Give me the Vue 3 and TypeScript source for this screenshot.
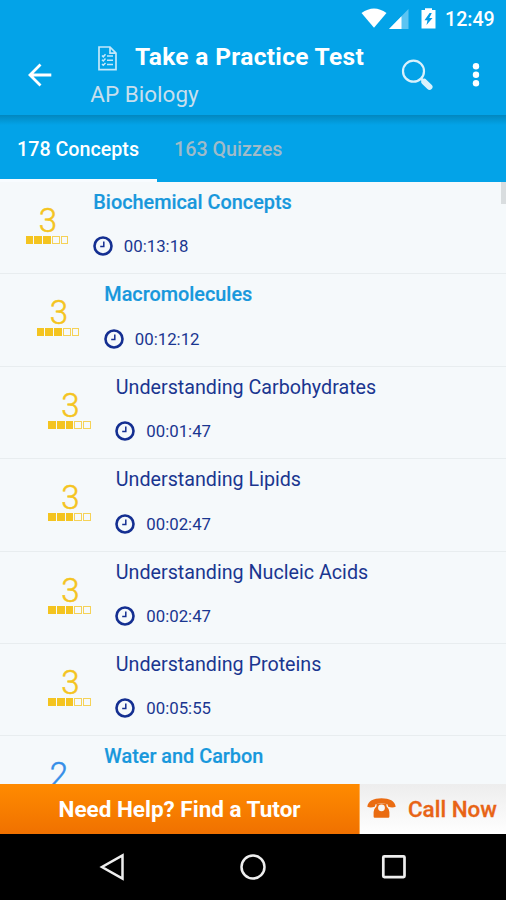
<script setup lang="ts">
interface Concept {
  title: string
  level: number
  rating: number
  time?: string
}

const concepts: Concept[] = [
  { title: 'Biochemical Concepts', level: 0, rating: 3, time: '00:13:18' },
  { title: 'Macromolecules', level: 1, rating: 3, time: '00:12:12' },
  { title: 'Understanding Carbohydrates', level: 2, rating: 3, time: '00:01:47' },
  { title: 'Understanding Lipids', level: 2, rating: 3, time: '00:02:47' },
  { title: 'Understanding Nucleic Acids', level: 2, rating: 3, time: '00:02:47' },
  { title: 'Understanding Proteins', level: 2, rating: 3, time: '00:05:55' },
  { title: 'Water and Carbon', level: 1, rating: 2 },
]
</script>

<template>
  <div class="screen">
    <header class="top">
      <div class="status">
        <svg class="wifi" width="26" height="20" viewBox="0 0 26 20"><path d="M0.5 5Q13-4 25.5 5L13 19.8Z" fill="#fff" /></svg>
        <svg class="signal" width="20" height="20" viewBox="0 0 20 20">
          <path d="M0 20L19.5 0V20Z" fill="#5cc4f2" /><path d="M0 20L12.5 7.2V20Z" fill="#fff" />
        </svg>
        <svg class="battery" width="15" height="22" viewBox="0 0 15 22">
          <path d="M4 2V0.3H11V2H14.5V20.5H.5V2Z" fill="#fff" />
          <path d="M8.6 5L3.5 12.2H6.5L5.5 17L11.5 10H8.3L10.8 5Z" fill="#039be5" />
        </svg>
        <span class="clock">12:49</span>
      </div>
      <div class="bar">
        <svg class="back" width="24" height="24" viewBox="0 0 24 24" fill="none" stroke="#fff" stroke-width="2.8">
          <path d="M23.3 12H2.5M12.5 1.5L2 12L12.5 22.5" />
        </svg>
        <div class="heading">
          <div class="title-line">
            <svg width="19" height="25" viewBox="0 0 19 25" fill="none" stroke="#c4e8fa" stroke-width="1.7">
              <path d="M1 1H12L18 7.2V23.7H1ZM12 1V7.2H18" />
              <path d="M9 10H15M9 14.2H15M9 18.5H15M4 9.5L5.3 10.8L7.5 8.2M4 13.7L5.3 15L7.5 12.5M4 18L5.3 19.3L7.5 17" stroke-width="1.5" />
            </svg>
            <h1>Take a Practice Test</h1>
          </div>
          <div class="subject">AP Biology</div>
        </div>
        <svg class="search" width="33" height="33" viewBox="0 0 33 33" fill="none" stroke="#d9f1fc">
          <circle cx="12.5" cy="12.2" r="10.5" stroke-width="2.2" />
          <path d="M20 19.5L23 22.5" stroke-width="2.5" />
          <path d="M23.3 22.8L28.5 27.8" stroke-width="6" stroke-linecap="round" />
        </svg>
        <svg class="more" width="8" height="26" viewBox="0 0 8 26" fill="#fff">
          <circle cx="4" cy="4.2" r="3.2" /><circle cx="4" cy="12.7" r="3.2" /><circle cx="4" cy="21.2" r="3.2" />
        </svg>
      </div>
    </header>

    <nav class="tabs">
      <div class="tab active"><span>178 Concepts</span></div>
      <div class="tab"><span>163 Quizzes</span></div>
    </nav>

    <main class="list">
      <div v-for="concept in concepts" :key="concept.title" class="row" :class="['level-' + concept.level, 'rating-' + concept.rating]">
        <div class="score">
          <span class="digit">{{ concept.rating }}</span>
          <div class="boxes">
            <i v-for="n in 5" :key="n" :class="{ on: n <= concept.rating }"></i>
          </div>
        </div>
        <div class="info">
          <div class="name"><span>{{ concept.title }}</span></div>
          <div v-if="concept.time" class="time">
            <svg width="20" height="20" viewBox="0 0 20 20" fill="none" stroke="#142f91">
              <circle cx="10" cy="10" r="8.5" stroke-width="2.6" />
              <path d="M10.8 5.6V10.6H7.2" stroke-width="1.5" />
            </svg>
            <span>{{ concept.time }}</span>
          </div>
        </div>
      </div>
      <div class="scrollbar"></div>
    </main>

    <footer class="help">
      <div class="tutor"><span>Need Help? Find a Tutor</span></div>
      <div class="call">
        <svg width="29" height="20" viewBox="0 0 29 20">
          <path d="M.3 8.8C1 3 6.5.3 14.5.3S28 3 28.7 8.8Q25.5 10.3 21.2 8.8L20.4 6.2Q14.5 4.3 8.6 6.2L7.8 8.8Q3.5 10.3.3 8.8Z" fill="#ea6c12" />
          <path d="M9.5 5.5H19.5V8.2Q22.4 11 22.4 14V18.5Q22.4 19.7 21.2 19.7H7.8Q6.6 19.7 6.6 18.5V14Q6.6 11 9.5 8.2Z" fill="#ea6c12" />
          <circle cx="14.5" cy="9.8" r="3.4" fill="#f6f6f6" />
        </svg>
        <span>Call Now</span>
      </div>
    </footer>

    <div class="navigation">
      <svg width="26" height="28" viewBox="0 0 26 28"><path d="M23.5 2.5V25.5L3 14Z" fill="none" stroke="#eee" stroke-width="2.5" /></svg>
      <svg width="28" height="28" viewBox="0 0 28 28"><circle cx="14" cy="14" r="11.5" fill="none" stroke="#eee" stroke-width="2.5" /></svg>
      <svg width="26" height="26" viewBox="0 0 26 26"><rect x="2.3" y="2.3" width="21.2" height="20.8" rx="1" fill="none" stroke="#eee" stroke-width="2.7" /></svg>
    </div>
  </div>
</template>

<style>
body { margin: 0; overflow: hidden; }
</style>

<style scoped>
* { box-sizing: border-box; }
.screen { width: 506px; height: 900px; display: flex; flex-direction: column; overflow: hidden; background: #f5f9fb; font-family: Roboto, "Liberation Sans", sans-serif; white-space: nowrap; }
svg { display: block; flex: none; }
.top { height: 115px; flex: none; background: #03a3e8; }
.status { height: 37px; display: flex; align-items: flex-start; justify-content: flex-end; padding: 8px 12px 0 0; color: #fff; }
.wifi { margin-right: 1px; }
.signal { margin: 1px 12px 0 1px; }
.clock { width: 49px; margin-left: 9px; font-size: 19.6px; line-height: 23px; font-weight: 500; }
.bar { height: 78px; display: flex; align-items: flex-start; padding: 0 26px 0 28px; }
.back { margin-top: 26px; }
.heading { width: 310px; margin-left: 39px; }
.title-line { height: 40px; display: flex; padding: 9px 0 0 7px; }
h1 { margin: -4px 0 0 18px; font-size: 24.5px; line-height: 30px; letter-spacing: .33px; font-weight: 700; color: #fff; }
.subject { margin-left: -.7px; font-size: 22.5px; line-height: 34px; color: #c8dfed; }
.search { margin-top: 22px; }
.more { margin: 25px 0 0 38px; }
.tabs { height: 67px; flex: none; display: flex; background: linear-gradient(#0287bf, #0293d0 4px, #03a3e8 10px); }
.tab { padding: 0 17px; font-size: 19.7px; line-height: 69px; font-weight: 500; color: #9fbbc9; }
.active { width: 157px; color: #fff; border-bottom: 3px solid #f8fcff; }
.list { position: relative; flex: 1; min-height: 0; overflow: hidden; }
.row { height: 92.4px; display: flex; border-bottom: 1px solid #e8edef; color: #1a3690; padding-left: 25px; }
.level-1 { padding-left: 36px; }
.level-2 { padding-left: 47.5px; }
.score { width: 44px; display: flex; flex-direction: column; align-items: center; padding-top: 21px; color: #f4c420; }
.rating-2 .score { color: #348ee8; }
.digit { margin-left: 2px; font-size: 33px; line-height: 36px; font-weight: 300; -webkit-text-stroke: .5px currentColor; }
.boxes { display: flex; gap: 1px; margin-top: -3px; }
.boxes i { width: 7.7px; height: 8px; border: 1px solid currentColor; opacity: .75; }
.boxes .on { background: currentColor; opacity: 1; }
.info { margin-left: 24.3px; }
.name { font-size: 19.7px; line-height: 28px; padding-top: 7px; }
.level-0 .name, .level-1 .name { font-size: 19.85px; font-weight: 500; color: #1898dc; -webkit-text-stroke: .2px currentColor; }
.time { display: flex; align-items: center; gap: 11px; height: 22px; margin: 18.4px 0 0 -.5px; font-size: 16.8px; }
.scrollbar { position: absolute; top: 0; right: 0; width: 5px; height: 22px; background: #d9dddf; }
.help { height: 49.5px; flex: none; display: flex; font-weight: 700; }
.tutor { width: 360px; border-right: 1px solid #ffae55; background: linear-gradient(#ff8b00, #f07100); color: #fff; font-size: 22.5px; line-height: 50px; padding-left: 58.5px; }
.call { flex: 1; display: flex; gap: 12px; padding-left: 7px; background: linear-gradient(#ededed, #fff); color: #e86416; font-size: 22.4px; line-height: 50px; font-weight: 500; -webkit-text-stroke: .3px currentColor; }
.call svg { margin-top: 14px; }
.navigation { height: 66.5px; flex: none; display: flex; align-items: center; justify-content: center; gap: 114px; background: #000; }
</style>
